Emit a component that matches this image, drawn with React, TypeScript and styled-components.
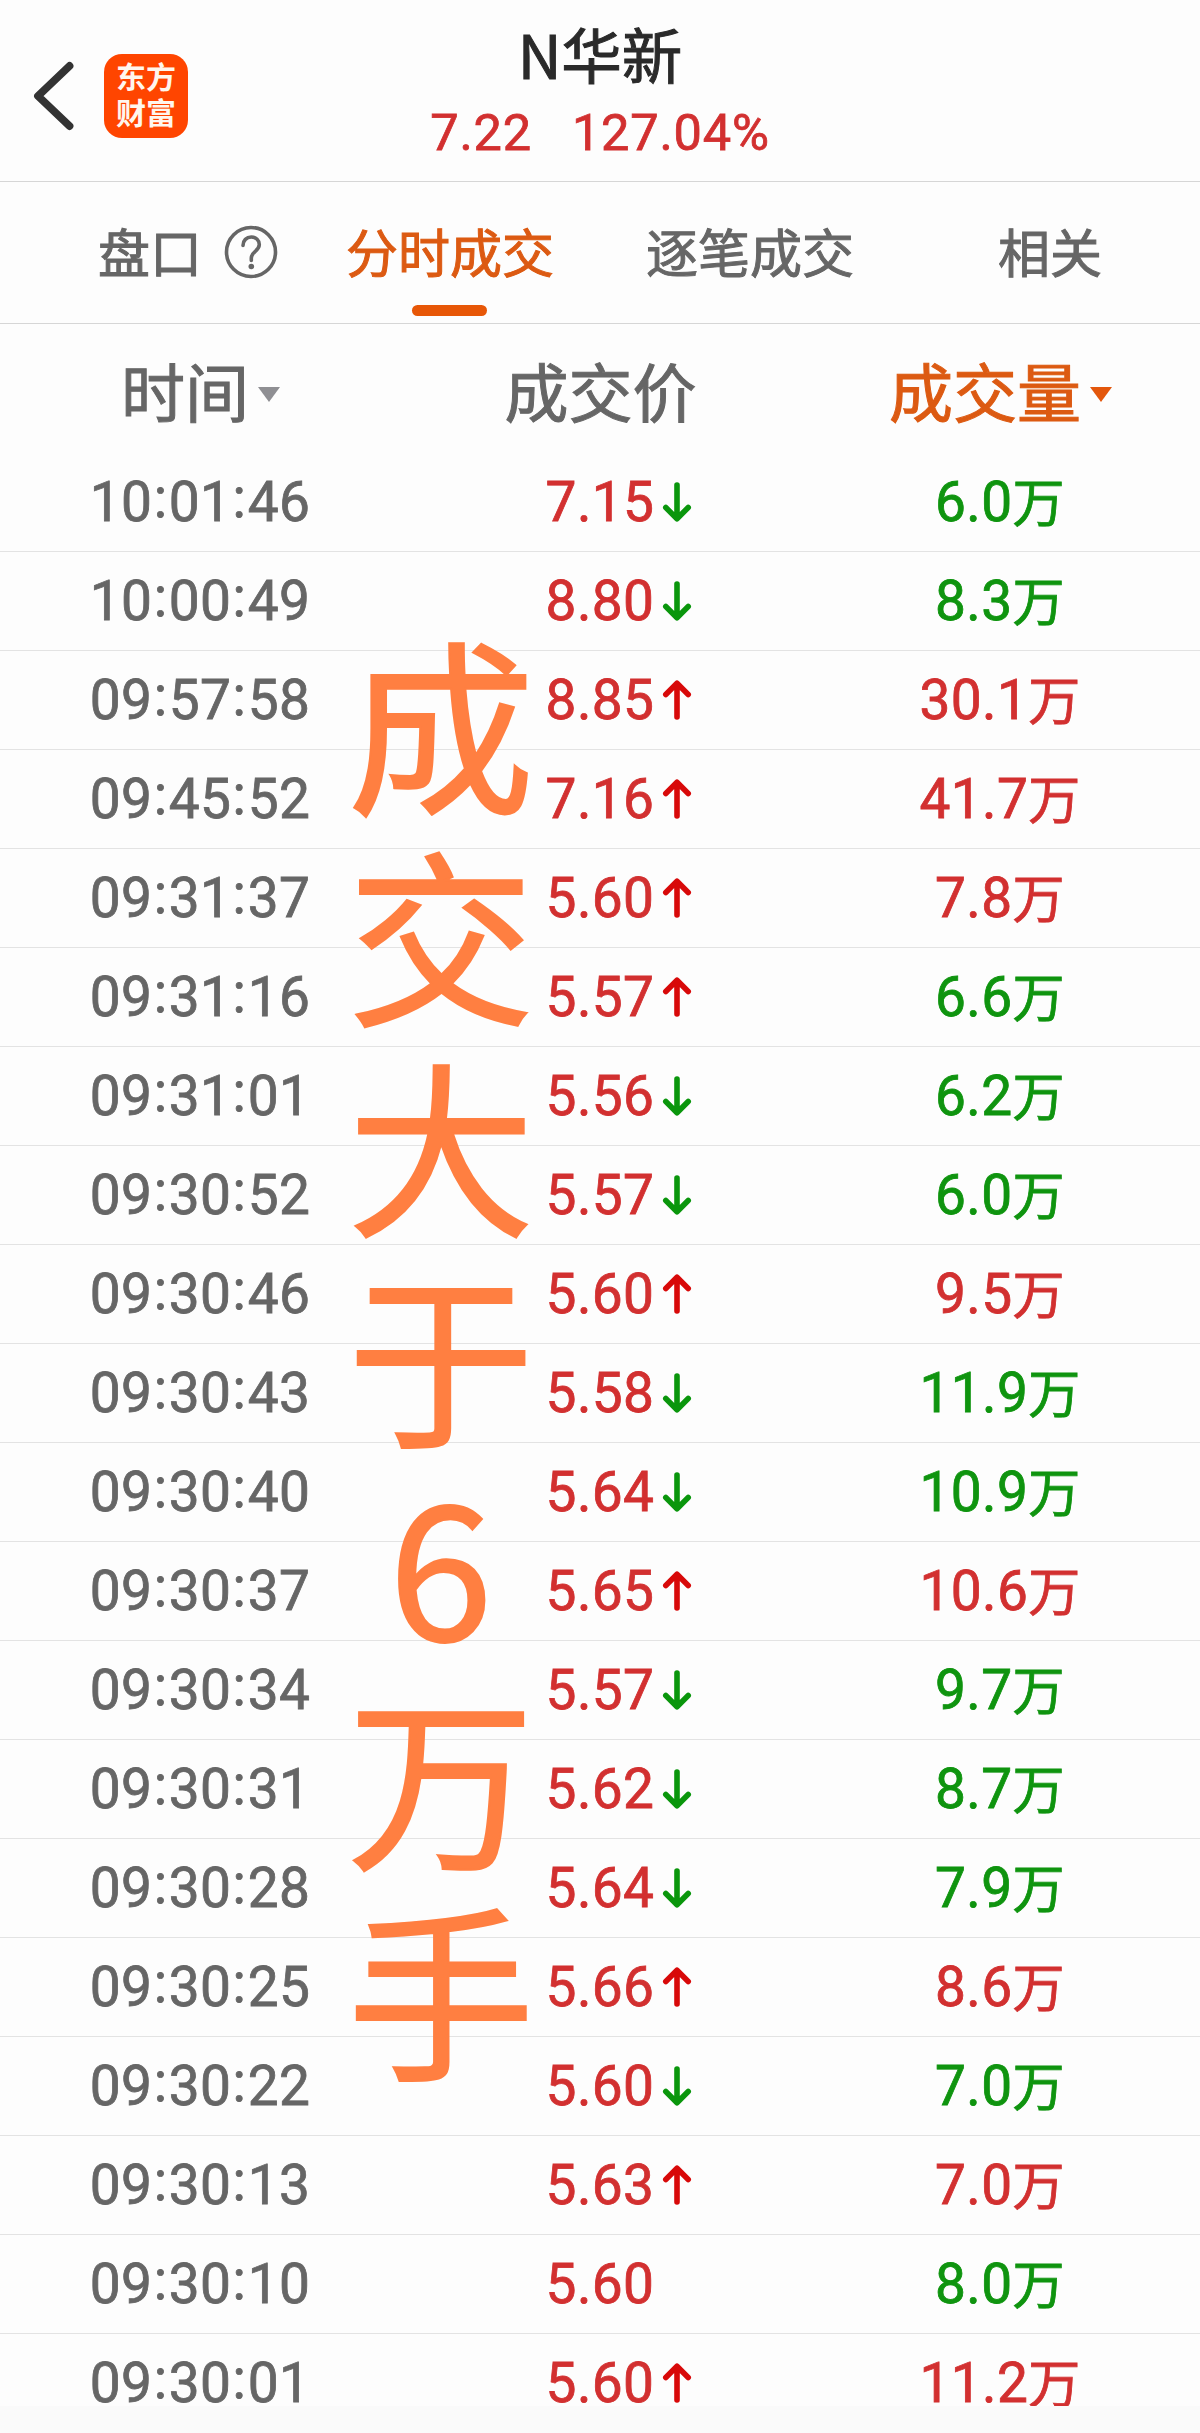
import React from 'react';
import styled, { createGlobalStyle } from 'styled-components';

const CJK = '"Noto Sans CJK SC", sans-serif';
const DIGITS = 'Roboto, "Noto Sans CJK SC", sans-serif';

const RED = '#d23030';
const GREEN = '#0f940f';
const ORANGE = '#dc5a12';
const GREY = '#666666';

type Trend = 'up' | 'down';

interface Trade {
  time: string;
  price: string;
  arrow?: Trend;
  volume: string;
  side: Trend;
}

const trade = (time: string, price: string, arrow: Trend | undefined, volume: string, side: Trend): Trade => ({
  time,
  price,
  arrow,
  volume,
  side,
});

const trades: Trade[] = [
  trade('10:01:46', '7.15', 'down', '6.0', 'down'),
  trade('10:00:49', '8.80', 'down', '8.3', 'down'),
  trade('09:57:58', '8.85', 'up', '30.1', 'up'),
  trade('09:45:52', '7.16', 'up', '41.7', 'up'),
  trade('09:31:37', '5.60', 'up', '7.8', 'up'),
  trade('09:31:16', '5.57', 'up', '6.6', 'down'),
  trade('09:31:01', '5.56', 'down', '6.2', 'down'),
  trade('09:30:52', '5.57', 'down', '6.0', 'down'),
  trade('09:30:46', '5.60', 'up', '9.5', 'up'),
  trade('09:30:43', '5.58', 'down', '11.9', 'down'),
  trade('09:30:40', '5.64', 'down', '10.9', 'down'),
  trade('09:30:37', '5.65', 'up', '10.6', 'up'),
  trade('09:30:34', '5.57', 'down', '9.7', 'down'),
  trade('09:30:31', '5.62', 'down', '8.7', 'down'),
  trade('09:30:28', '5.64', 'down', '7.9', 'down'),
  trade('09:30:25', '5.66', 'up', '8.6', 'up'),
  trade('09:30:22', '5.60', 'down', '7.0', 'down'),
  trade('09:30:13', '5.63', 'up', '7.0', 'up'),
  trade('09:30:10', '5.60', undefined, '8.0', 'down'),
  trade('09:30:01', '5.60', 'up', '11.2', 'up'),
];

const GlobalStyle = createGlobalStyle`
  * { box-sizing: border-box; }
  body { margin: 0; background: #fdfdfd; }
`;

const Page = styled.div`
  position: relative;
  width: 1200px;
  height: 2433px;
  overflow: hidden;
  background: #fdfdfd;
  font-family: ${CJK};
  color: ${GREY};
`;

const Header = styled.header`
  display: grid;
  grid-template-columns: 300px 600px 300px;
  height: 182px;
  border-bottom: 1px solid #d6d6d6;
`;

const HeaderLeft = styled.div`
  display: flex;
  align-items: flex-start;
  gap: 28px;
  padding: 54px 0 0 32px;
`;

const BackIcon = styled.svg`
  width: 44px;
  height: 84px;
`;

const Logo = styled.div`
  display: flex;
  flex-direction: column;
  align-items: center;
  width: 84px;
  height: 84px;
  padding-top: 3px;
  border-radius: 18px;
  background: #ff4500;
  color: #fff6ee;
  font-size: 30px;
  font-weight: 700;
  line-height: 36px;
`;

const HeaderTitle = styled.div`
  display: flex;
  flex-direction: column;
  align-items: center;
`;

const StockName = styled.h1`
  margin: 15px 0 0;
  font-size: 60.5px;
  font-weight: 400;
  line-height: 76px;
  color: #2a2a2a;
  -webkit-text-stroke: 1px #2a2a2a;
`;

const Quote = styled.div`
  display: flex;
  gap: 40px;
  margin-top: 12px;
  font-family: ${DIGITS};
  font-size: 50.5px;
  line-height: 60px;
  letter-spacing: 0.8px;
  color: ${RED};
  -webkit-text-stroke: 0.8px currentColor;
`;

const Tabs = styled.nav`
  display: grid;
  grid-template-columns: repeat(4, 1fr);
  height: 142px;
  border-bottom: 1px solid #d6d6d6;
`;

const Tab = styled.div<{ $active?: boolean }>`
  display: flex;
  flex-direction: column;
  align-items: center;
  padding-top: 38px;
  font-size: 52px;
  line-height: 62px;
  color: ${(p) => (p.$active ? ORANGE : GREY)};
  -webkit-text-stroke: 1px currentColor;
`;

const TabLabel = styled.span`
  position: relative;
  display: block;
`;

const ActiveBar = styled.span`
  width: 75px;
  height: 11px;
  margin: 23px 1px 0 0;
  border-radius: 6px;
  background: #e75707;
`;

const HelpIcon = styled.svg`
  position: absolute;
  left: calc(100% + 22px);
  top: 5px;
  width: 54px;
  height: 54px;
`;

const ColumnHeads = styled.div`
  display: grid;
  grid-template-columns: repeat(3, 1fr);
  height: 129px;
  padding-top: 23px;
`;

const ColumnHead = styled.div<{ $active?: boolean }>`
  display: flex;
  justify-content: center;
  align-items: center;
  gap: 9px;
  height: 84px;
  padding-left: 1px;
  font-size: 64px;
  line-height: 84px;
  color: ${(p) => (p.$active ? ORANGE : GREY)};
  -webkit-text-stroke: 1px currentColor;
`;

const SortCaret = styled.i<{ $active?: boolean }>`
  margin-top: 10px;
  border: 11.5px solid transparent;
  border-top: 15px solid ${(p) => (p.$active ? '#e3570c' : '#8f8f93')};
  border-bottom-width: 0;
`;

const Row = styled.div`
  display: grid;
  grid-template-columns: repeat(3, 1fr);
  align-items: center;
  height: 99px;
  padding-top: 1px;
  border-bottom: 1px solid #e3e3e3;
  font-family: ${DIGITS};
  font-size: 55px;
  line-height: 97px;
  letter-spacing: 0.4px;
  -webkit-text-stroke: 0.8px currentColor;
`;

const Time = styled.div`
  text-align: center;
`;

const Colon = styled.span`
  position: relative;
  top: -4px;
  margin: 0 1.3px;
`;

const PriceCell = styled.div`
  display: flex;
  justify-content: center;
  color: ${RED};
`;

const Price = styled.span`
  position: relative;
`;

const Arrow = styled.svg<{ $dir: Trend }>`
  position: absolute;
  left: calc(100% + 7px);
  top: 26px;
  width: 32px;
  height: 44px;
  color: ${(p) => (p.$dir === 'up' ? '#d80909' : '#0a960c')};
  transform: ${(p) => (p.$dir === 'up' ? 'scaleY(-1)' : 'none')};
`;

const Volume = styled.div<{ $side: Trend }>`
  display: flex;
  justify-content: center;
  color: ${(p) => (p.$side === 'up' ? RED : GREEN)};
`;

const Unit = styled.span`
  margin-top: -3px;
  font-family: ${CJK};
  font-size: 52px;
`;

const Caption = styled.div`
  position: absolute;
  top: 614px;
  left: 347px;
  display: flex;
  flex-direction: column;
  align-items: center;
  width: 188px;
  font-size: 187px;
  line-height: 211px;
  color: #ff7f41;
  -webkit-text-stroke: 2px currentColor;
`;

const CaptionChar = styled.span<{ $digit: boolean }>`
  height: 211px;
  margin: ${(p) => (p.$digit ? '-4px 0 4px' : '0')};
`;

const BottomStrip = styled.div`
  position: relative;
  height: 27px;
  margin-top: -27px;
  background: #fafafa;
`;

function TimeText({ value }: { value: string }) {
  const [h, m, s] = value.split(':');
  return (
    <Time>
      {h}
      <Colon>:</Colon>
      {m}
      <Colon>:</Colon>
      {s}
    </Time>
  );
}

function TradeRow({ item }: { item: Trade }) {
  return (
    <Row>
      <TimeText value={item.time} />
      <PriceCell>
        <Price>
          {item.price}
          {item.arrow && (
            <Arrow $dir={item.arrow} viewBox="0 0 32 44" fill="none" stroke="currentColor" strokeWidth="5.600" strokeLinecap="round" strokeLinejoin="round">
              <path d="M16 5v33.500M4.800 27.500L16 38.800l11.200-11.300" />
            </Arrow>
          )}
        </Price>
      </PriceCell>
      <Volume $side={item.side}>
        {item.volume}
        <Unit>万</Unit>
      </Volume>
    </Row>
  );
}

export default function App() {
  return (
    <Page>
      <GlobalStyle />
      <Header>
        <HeaderLeft>
          <BackIcon viewBox="0 0 44 84" fill="none" stroke="#333" strokeWidth="7.800" strokeLinecap="round" strokeLinejoin="round">
            <path d="M37.500 12L6 42l31.500 30" />
          </BackIcon>
          <Logo>
            <span>东方</span>
            <span>财富</span>
          </Logo>
        </HeaderLeft>
        <HeaderTitle>
          <StockName>N华新</StockName>
          <Quote>
            <span>7.22</span>
            <span>127.04%</span>
          </Quote>
        </HeaderTitle>
      </Header>

      <Tabs>
        <Tab>
          <TabLabel>
            盘口
            <HelpIcon viewBox="0 0 54 54" fill="none" stroke={GREY} strokeWidth="3.600" strokeLinecap="round">
              <circle cx="27" cy="27" r="24.500" />
              <path d="M19 20.500c0-5 3.500-8.500 8.300-8.500s8 3.300 8 7.500c0 6.500-8 7.200-8 13.500v2.500" />
              <circle cx="27.300" cy="41.500" r="2.800" fill={GREY} stroke="none" />
            </HelpIcon>
          </TabLabel>
        </Tab>
        <Tab $active>
          <TabLabel>分时成交</TabLabel>
          <ActiveBar />
        </Tab>
        <Tab>
          <TabLabel>逐笔成交</TabLabel>
        </Tab>
        <Tab>
          <TabLabel>相关</TabLabel>
        </Tab>
      </Tabs>

      <ColumnHeads>
        <ColumnHead>
          时间
          <SortCaret />
        </ColumnHead>
        <ColumnHead>成交价</ColumnHead>
        <ColumnHead $active>
          成交量
          <SortCaret $active />
        </ColumnHead>
      </ColumnHeads>

      {trades.map((item) => (
        <TradeRow key={item.time} item={item} />
      ))}
      <BottomStrip />

      <Caption>
        {Array.from('成交大于6万手').map((char) => (
          <CaptionChar key={char} $digit={char === '6'}>
            {char}
          </CaptionChar>
        ))}
      </Caption>
    </Page>
  );
}
